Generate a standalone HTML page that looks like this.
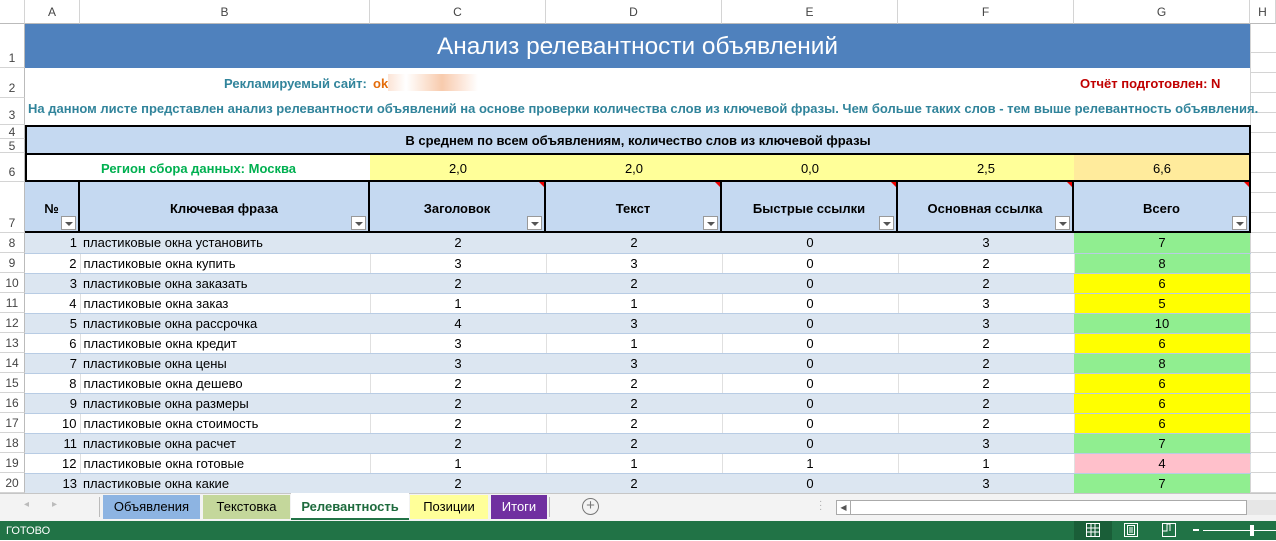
<!DOCTYPE html>
<html><head><meta charset="utf-8"><style>
*{margin:0;padding:0;box-sizing:border-box}
body{width:1276px;height:540px;overflow:hidden;background:#fff;font-family:"Liberation Sans",sans-serif;position:relative;font-size:13px;color:#000}
.a{position:absolute}
.ch{position:absolute;top:0;height:24px;line-height:24px;text-align:center;color:#444;font-size:12px;border-right:1px solid #d4d4d4;border-bottom:1px solid #bbb;background:#fff}
.rh{position:absolute;left:0;width:25px;text-align:center;color:#444;font-size:12px;border-bottom:1px solid #d4d4d4;border-right:1px solid #bbb;background:#fff;display:flex;align-items:flex-end;justify-content:center;padding-bottom:2px}
table{border-collapse:collapse;table-layout:fixed;position:absolute;left:25px;top:233px}
td{height:20px;padding:0 3px;font-size:13px;line-height:19px;border-bottom:1px solid #b8cce4;white-space:nowrap;overflow:hidden}
tr.b td{background:#dce6f1}
tr.w td{background:#fff;border-right:1px solid #e0e0e0}
td.c{text-align:center}td.r{text-align:right}
td.gr{background:#90ee90!important}td.ye{background:#ffff00!important}td.pk{background:#ffc0cb!important}
.hd{position:absolute;top:182px;height:50px;background:#c5d9f1;border-right:2px solid #000;font-weight:bold;font-size:13px;text-align:center;line-height:54px}
.dd{position:absolute;right:2px;bottom:2px;width:15px;height:14px;background:#fff;border:1px solid #999}
.dd:after{content:"";position:absolute;left:3px;top:5px;border:4px solid transparent;border-top:4px solid #555;border-bottom:0}
.rc{position:absolute;top:0;right:0;border-top:5px solid #e00;border-left:5px solid transparent}
.tab{position:absolute;top:495px;height:24px;line-height:23px;font-size:13px;text-align:center}
</style></head><body>
<div class="ch" style="left:0;width:25px"></div>
<div class="ch" style="left:25px;width:55px">A</div>
<div class="ch" style="left:80px;width:290px">B</div>
<div class="ch" style="left:370px;width:176px">C</div>
<div class="ch" style="left:546px;width:176px">D</div>
<div class="ch" style="left:722px;width:176px">E</div>
<div class="ch" style="left:898px;width:176px">F</div>
<div class="ch" style="left:1074px;width:176px">G</div>
<div class="ch" style="left:1250px;width:26px">H</div>
<div class="rh" style="top:24px;height:44px">1</div>
<div class="rh" style="top:68px;height:30px">2</div>
<div class="rh" style="top:98px;height:27px">3</div>
<div class="rh" style="top:125px;height:14px;padding:0;line-height:12px">4</div>
<div class="rh" style="top:139px;height:14px;padding:0;line-height:12px">5</div>
<div class="rh" style="top:153px;height:29px">6</div>
<div class="rh" style="top:182px;height:51px">7</div>
<div class="rh" style="top:233px;height:20px">8</div>
<div class="rh" style="top:253px;height:20px">9</div>
<div class="rh" style="top:273px;height:20px">10</div>
<div class="rh" style="top:293px;height:20px">11</div>
<div class="rh" style="top:313px;height:20px">12</div>
<div class="rh" style="top:333px;height:20px">13</div>
<div class="rh" style="top:353px;height:20px">14</div>
<div class="rh" style="top:373px;height:20px">15</div>
<div class="rh" style="top:393px;height:20px">16</div>
<div class="rh" style="top:413px;height:20px">17</div>
<div class="rh" style="top:433px;height:20px">18</div>
<div class="rh" style="top:453px;height:20px">19</div>
<div class="rh" style="top:473px;height:20px">20</div>
<div class="a" style="left:1250px;top:24px;width:26px;height:469px;border-left:1px solid #d4d4d4;background:repeating-linear-gradient(#fff 0 19px,#d4d4d4 19px 20px);background-position:0 9px"></div>
<div class="a" style="left:25px;top:24px;width:1225px;height:44px;background:#4f81bd;color:#fff;font-size:24.4px;text-align:center;line-height:46px">Анализ релевантности объявлений</div>
<div class="a" style="left:224px;top:76px;font-weight:bold;color:#31849b;font-size:13px">Рекламируемый сайт:</div>
<div class="a" style="left:373px;top:76px;font-weight:bold;color:#e46c0a;font-size:13px">ok</div>
<div class="a" style="left:388px;top:74px;width:90px;height:17px;background:linear-gradient(90deg,#fce4d6,#fff 20%,#f8cbad 60%,#fce4d6 80%,#fff)"></div>
<div class="a" style="left:1080px;top:76px;font-weight:bold;color:#c00000;font-size:13px">Отчёт подготовлен: N</div>
<div class="a" style="left:28px;top:101px;font-weight:bold;color:#31849b;font-size:13px;white-space:nowrap">На данном листе представлен анализ релевантности объявлений на основе проверки количества слов из ключевой фразы. Чем больше таких слов - тем выше релевантность объявления.</div>
<div class="a" style="left:25px;top:125px;width:1226px;height:58px;border:2px solid #000;background:#c5d9f1"></div>
<div class="a" style="left:25px;top:133px;width:1226px;text-align:center;font-weight:bold;font-size:13px">В среднем по всем объявлениям, количество слов из ключевой фразы</div>
<div class="a" style="left:25px;top:153px;width:1226px;height:2px;background:#000"></div>
<div class="a" style="left:27px;top:155px;width:343px;height:26px;background:#fff;color:#00b050;font-weight:bold;text-align:center;line-height:28px">Регион сбора данных: Москва</div>
<div class="a" style="left:370px;top:155px;width:704px;height:26px;background:#ffff99"></div>
<div class="a" style="left:1074px;top:155px;width:175px;height:26px;background:#ffeb9c"></div>
<div class="a" style="left:370px;top:155px;width:176px;line-height:28px;text-align:center">2,0</div>
<div class="a" style="left:546px;top:155px;width:176px;line-height:28px;text-align:center">2,0</div>
<div class="a" style="left:722px;top:155px;width:176px;line-height:28px;text-align:center">0,0</div>
<div class="a" style="left:898px;top:155px;width:176px;line-height:28px;text-align:center">2,5</div>
<div class="a" style="left:1074px;top:155px;width:176px;line-height:28px;text-align:center">6,6</div>
<div class="hd" style="left:25px;width:55px;border-left:0">№<div class="dd"></div></div>
<div class="hd" style="left:80px;width:290px">Ключевая фраза<div class="dd"></div></div>
<div class="hd" style="left:370px;width:176px">Заголовок<div class="dd"></div><div class="rc"></div></div>
<div class="hd" style="left:546px;width:176px">Текст<div class="dd"></div><div class="rc"></div></div>
<div class="hd" style="left:722px;width:176px">Быстрые ссылки<div class="dd"></div><div class="rc"></div></div>
<div class="hd" style="left:898px;width:176px">Основная ссылка<div class="dd"></div><div class="rc"></div></div>
<div class="hd" style="left:1074px;width:177px">Всего<div class="dd"></div><div class="rc"></div></div>
<div class="a" style="left:25px;top:180px;width:1226px;height:2px;background:#000"></div>
<div class="a" style="left:25px;top:231px;width:1226px;height:2px;background:#000"></div>
<table>
<colgroup><col style="width:55px"><col style="width:290px"><col style="width:176px"><col style="width:176px"><col style="width:176px"><col style="width:176px"><col style="width:176px"></colgroup>
<tr class="b"><td class="r">1</td><td>пластиковые окна установить</td><td class="c">2</td><td class="c">2</td><td class="c">0</td><td class="c">3</td><td class="c gr">7</td></tr>
<tr class="w"><td class="r">2</td><td>пластиковые окна купить</td><td class="c">3</td><td class="c">3</td><td class="c">0</td><td class="c">2</td><td class="c gr">8</td></tr>
<tr class="b"><td class="r">3</td><td>пластиковые окна заказать</td><td class="c">2</td><td class="c">2</td><td class="c">0</td><td class="c">2</td><td class="c ye">6</td></tr>
<tr class="w"><td class="r">4</td><td>пластиковые окна заказ</td><td class="c">1</td><td class="c">1</td><td class="c">0</td><td class="c">3</td><td class="c ye">5</td></tr>
<tr class="b"><td class="r">5</td><td>пластиковые окна рассрочка</td><td class="c">4</td><td class="c">3</td><td class="c">0</td><td class="c">3</td><td class="c gr">10</td></tr>
<tr class="w"><td class="r">6</td><td>пластиковые окна кредит</td><td class="c">3</td><td class="c">1</td><td class="c">0</td><td class="c">2</td><td class="c ye">6</td></tr>
<tr class="b"><td class="r">7</td><td>пластиковые окна цены</td><td class="c">3</td><td class="c">3</td><td class="c">0</td><td class="c">2</td><td class="c gr">8</td></tr>
<tr class="w"><td class="r">8</td><td>пластиковые окна дешево</td><td class="c">2</td><td class="c">2</td><td class="c">0</td><td class="c">2</td><td class="c ye">6</td></tr>
<tr class="b"><td class="r">9</td><td>пластиковые окна размеры</td><td class="c">2</td><td class="c">2</td><td class="c">0</td><td class="c">2</td><td class="c ye">6</td></tr>
<tr class="w"><td class="r">10</td><td>пластиковые окна стоимость</td><td class="c">2</td><td class="c">2</td><td class="c">0</td><td class="c">2</td><td class="c ye">6</td></tr>
<tr class="b"><td class="r">11</td><td>пластиковые окна расчет</td><td class="c">2</td><td class="c">2</td><td class="c">0</td><td class="c">3</td><td class="c gr">7</td></tr>
<tr class="w"><td class="r">12</td><td>пластиковые окна готовые</td><td class="c">1</td><td class="c">1</td><td class="c">1</td><td class="c">1</td><td class="c pk">4</td></tr>
<tr class="b"><td class="r">13</td><td>пластиковые окна какие</td><td class="c">2</td><td class="c">2</td><td class="c">0</td><td class="c">3</td><td class="c gr">7</td></tr>
</table>
<div class="a" style="left:0;top:493px;width:1276px;height:28px;background:#f3f3f3;border-top:1px solid #c6c6c6"></div>
<div class="a" style="left:24px;top:499px;color:#bbb;font-size:10px">◂</div>
<div class="a" style="left:52px;top:499px;color:#bbb;font-size:10px">▸</div>
<div class="a" style="left:99px;top:497px;width:1px;height:20px;background:#bbb"></div>
<div class="tab" style="left:103px;width:97px;background:#8db4e2">Объявления</div>
<div class="tab" style="left:203px;width:87px;background:#c4d79b">Текстовка</div>
<div class="tab" style="left:291px;width:118px;background:#fff;top:493px;height:27px;color:#1e6b3d;font-weight:bold;border-bottom:2px solid #217346;line-height:27px">Релевантность</div>
<div class="tab" style="left:410px;width:78px;background:#ffff99">Позиции</div>
<div class="tab" style="left:491px;width:56px;background:#7030a0;color:#fff">Итоги</div>
<div class="a" style="left:549px;top:497px;width:1px;height:20px;background:#bbb"></div>
<div class="a" style="left:582px;top:498px;width:17px;height:17px;border:1.5px solid #777;border-radius:50%;text-align:center;line-height:14px;color:#777;font-size:15px">+</div>
<div class="a" style="left:819px;top:500px;color:#aaa;font-size:10px;line-height:4px">·<br>·<br>·</div>
<div class="a" style="left:836px;top:500px;width:411px;height:15px;border:1px solid #aaa;background:#fff"></div>
<div class="a" style="left:836px;top:500px;width:15px;height:15px;border:1px solid #aaa;font-size:8px;text-align:center;line-height:13px;color:#555">◀</div>
<div class="a" style="left:1247px;top:500px;width:29px;height:15px;background:#e6e6e6"></div>
<div class="a" style="left:0;top:521px;width:1276px;height:19px;background:#217346;color:#fff;font-size:11px;line-height:20px;padding-left:6px">ГОТОВО</div>
<div class="a" style="left:1074px;top:521px;width:38px;height:19px;background:#1a5e38"></div>
<svg class="a" style="left:1086px;top:523px" width="14" height="14" viewBox="0 0 14 14" fill="none" stroke="#fff" stroke-width="1"><rect x=".5" y=".5" width="13" height="13"/><path d="M5 0v14M9 0v14M0 5h14M0 9h14"/></svg>
<svg class="a" style="left:1124px;top:523px" width="14" height="14" viewBox="0 0 14 14" fill="none" stroke="#fff" stroke-width="1"><rect x=".5" y=".5" width="13" height="13"/><rect x="3.5" y="2.5" width="7" height="9"/><path d="M5 5h4M5 7h4M5 9h4"/></svg>
<svg class="a" style="left:1162px;top:523px" width="14" height="14" viewBox="0 0 14 14" fill="none" stroke="#fff" stroke-width="1"><rect x=".5" y=".5" width="13" height="13"/><path d="M5 0v8H1M5 1h3v7" /></svg>
<div class="a" style="left:1193px;top:529px;width:6px;height:2px;background:#fff"></div>
<div class="a" style="left:1203px;top:530px;width:73px;height:1px;background:#fff"></div>
<div class="a" style="left:1250px;top:525px;width:4px;height:11px;background:#fff"></div>
</body></html>
